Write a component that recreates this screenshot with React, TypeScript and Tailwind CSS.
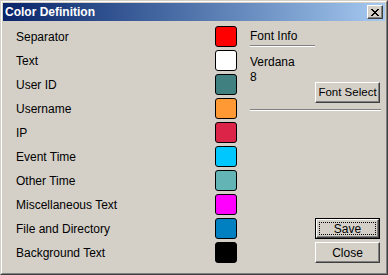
const rows = [
  { label: "Separator", swatch: "bg-[#ff0000]" },
  { label: "Text", swatch: "bg-[#ffffff]" },
  { label: "User ID", swatch: "bg-[#408080]" },
  { label: "Username", swatch: "bg-[#ff9933]" },
  { label: "IP", swatch: "bg-[#dc2348]" },
  { label: "Event Time", swatch: "bg-[#00c8ff]" },
  { label: "Other Time", swatch: "bg-[#63b5b5]" },
  { label: "Miscellaneous Text", swatch: "bg-[#ff00ff]" },
  { label: "File and Directory", swatch: "bg-[#0080c0]" },
  { label: "Background Text", swatch: "bg-[#000000]" },
];

function CloseGlyph() {
  // 8x7 pixel X like the classic caption button
  const px = [
    [0, 0], [1, 0], [6, 0], [7, 0],
    [1, 1], [2, 1], [5, 1], [6, 1],
    [2, 2], [3, 2], [4, 2], [5, 2],
    [3, 3], [4, 3],
    [2, 4], [3, 4], [4, 4], [5, 4],
    [1, 5], [2, 5], [5, 5], [6, 5],
    [0, 6], [1, 6], [6, 6], [7, 6],
  ];
  return (
    <svg width="8" height="7" viewBox="0 0 8 7" shapeRendering="crispEdges">
      {px.map(([x, y]) => (
        <rect key={`${x}-${y}`} x={x} y={y} width="1" height="1" fill="#000" />
      ))}
    </svg>
  );
}

function Button({ label, isDefault, small }: { label: string; isDefault?: boolean; small?: boolean }) {
  if (isDefault) {
    return (
      <div className="w-[65px] h-[21px] border border-black bg-[#d4d0c8]">
        <div className="h-full border border-t-white border-l-white border-b-[#404040] border-r-[#404040] shadow-[inset_-1px_-1px_0_#808080] p-[2px]">
          <div className="h-full border border-dotted border-black flex items-center justify-center leading-none">
            {label}
          </div>
        </div>
      </div>
    );
  }
  return (
    <div
      className={`w-[65px] h-[21px] bg-[#d4d0c8] border border-t-white border-l-white border-b-[#404040] border-r-[#404040] shadow-[inset_-1px_-1px_0_#808080] flex items-center justify-center leading-none whitespace-nowrap ${
        small ? "text-[11.5px]" : "text-[12px]"
      }`}
    >
      {label}
    </div>
  );
}

export default function App() {
  return (
    <div className="w-[388px] h-[275px] bg-[#d4d0c8] border border-t-[#d4d0c8] border-l-[#d4d0c8] border-b-[#404040] border-r-[#404040] font-['Liberation_Sans',Arial,sans-serif] text-[12px] text-black">
      <div className="h-full border border-t-white border-l-white border-b-[#808080] border-r-[#808080] p-px flex flex-col">
        <div className="h-[18px] bg-linear-to-r from-[#0a246a] to-[#a6caf0] flex items-center pl-[2px] pr-[2px]">
          <span className="flex-1 text-white font-bold text-[12px] leading-none">Color Definition</span>
          <div className="w-[16px] h-[14px] bg-[#d4d0c8] border border-t-white border-l-white border-b-[#404040] border-r-[#404040] shadow-[inset_-1px_-1px_0_#808080] flex items-center justify-center">
            <CloseGlyph />
          </div>
        </div>

        <div className="flex-1 flex">
          <div className="w-[234px] pt-[5px] pl-[13px] flex flex-col">
            {rows.map((r) => (
              <div key={r.label} className="h-[24px] flex items-start">
                <span className="flex-1 h-[21px] flex items-center">{r.label}</span>
                <div className={`w-[22px] h-[21px] border border-black rounded-[3px] ${r.swatch}`} />
              </div>
            ))}
          </div>

          <div className="flex-1 pl-[13px] pr-[4px] pt-[9px] flex flex-col">
            <div className="h-[13px] leading-[13px]">Font Info</div>
            <div className="w-[65px] mt-[2px] border-t border-t-[#808080] border-b border-b-white" />
            <div className="h-[13px] leading-[13px] mt-[9px]">Verdana</div>
            <div className="h-[13px] leading-[13px] mt-[2px]">8</div>
            <div className="self-end mr-px -mt-[2px]">
              <Button label="Font Select" small />
            </div>
            <div className="mt-[6px] border-t border-t-[#808080] border-b border-b-white" />
            <div className="self-end mr-px mt-[107px]">
              <Button label="Save" isDefault />
            </div>
            <div className="self-end mr-px mt-[3px]">
              <Button label="Close" />
            </div>
          </div>
        </div>
      </div>
    </div>
  );
}
